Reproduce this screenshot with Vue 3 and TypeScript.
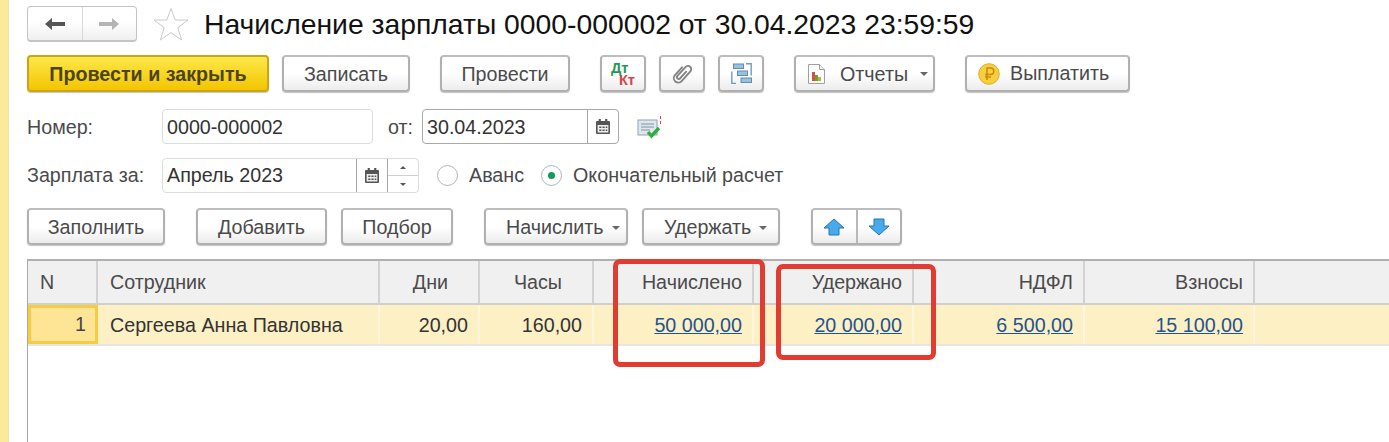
<script setup lang="ts">
interface Column { title: string; value: string; link?: boolean; inset?: boolean; align: 'left' | 'right' }
const columns: Column[] = [
  { title: 'Сотрудник', value: 'Сергеева Анна Павловна', align: 'left' },
  { title: 'Дни', value: '20,00', inset: true, align: 'right' },
  { title: 'Часы', value: '160,00', inset: true, align: 'right' },
  { title: 'Начислено', value: '50 000,00', link: true, align: 'right' },
  { title: 'Удержано', value: '20 000,00', link: true, align: 'right' },
  { title: 'НДФЛ', value: '6 500,00', link: true, align: 'right' },
  { title: 'Взносы', value: '15 100,00', link: true, align: 'right' },
]
</script>

<template>
  <div class="page">
    <aside class="strip"></aside>
    <main class="content">
      <div class="title-row">
        <div class="nav">
          <span class="nav-cell">
            <svg width="22" height="16" viewBox="0 0 22 16"><path d="M1 8 8 2v4h13v4H8v4z" fill="#555"/></svg>
          </span>
          <span class="nav-cell">
            <svg width="22" height="16" viewBox="0 0 22 16"><path d="M21 8 14 2v4H1v4h13v4z" fill="#b5b5b5"/></svg>
          </span>
        </div>
        <svg class="star" width="36" height="34" viewBox="0 0 36 34"><path d="M18 1.5 22.2 13H35L24.800 20.700 28.600 33 18 25.600 7.400 33l3.800-12.300L1 13h12.800z" fill="#fff" stroke="#c9c9c9"/></svg>
        <h1>Начисление зарплаты 0000-000002 от 30.04.2023 23:59:59</h1>
      </div>

      <div class="toolbar tb-1">
        <button class="btn primary w-242">Провести и закрыть</button>
        <button class="btn w-128 ml-13">Записать</button>
        <button class="btn w-130 ml-30">Провести</button>
        <button class="btn w-46 ml-30 dtkt"><span class="dt">Дт</span><span class="kt">Кт</span></button>
        <button class="btn w-46 ml-13 icon-btn">
          <svg width="24" height="24" viewBox="0 0 24 24" fill="none" stroke="#858585" stroke-width="1.900" stroke-linecap="round"><path transform="rotate(42 12 12)" d="M7.500 7v10.500a4.500 4.500 0 0 0 9 0V4.500a3.300 3.300 0 0 0-6.600 0v12a1.800 1.800 0 0 0 3.600 0V7.500"/></svg>
        </button>
        <button class="btn w-46 ml-13 icon-btn">
          <svg width="21" height="21" viewBox="0 0 21 21">
            <path d="M5 20.500H.8V8.500M15 .7h5.200v11.800" fill="none" stroke="#6e9cc0" stroke-width="1.400"/>
            <rect x="2.500" y="1" width="10" height="4.500" fill="#9cc0da" stroke="#5d8db3"/>
            <rect x="6.500" y="8" width="10" height="4.500" fill="#9cc0da" stroke="#5d8db3"/>
            <rect x="10" y="15" width="10.500" height="4.500" fill="#9cc0da" stroke="#5d8db3"/>
          </svg>
        </button>
        <button class="btn w-141 ml-30 report">
          <svg width="17" height="20" viewBox="0 0 17 20"><path d="M.5.5h11l5 5v14H.5z" fill="#fff" stroke="#a0a0a0"/><path d="M11.500.5v5h5" fill="#eee" stroke="#a0a0a0"/><rect x="4" y="8" width="3" height="9" fill="#d9533f"/><rect x="7" y="11" width="3" height="6" fill="#5aa83c"/><rect x="10" y="13" width="3" height="4" fill="#d9a52f"/></svg>
          <span class="report-text">Отчеты</span><i class="caret wide"></i>
        </button>
        <button class="btn w-165 ml-30 pay">
          <svg width="22" height="22" viewBox="0 0 22 22"><circle cx="11" cy="11" r="10.300" fill="#f7cf3d" stroke="#e3ad2a"/><path d="M9 17V5h3.500a3.200 3.200 0 0 1 0 6.500H7M7 14h6" fill="none" stroke="#c98a10" stroke-width="1.500"/></svg>
          <span>Выплатить</span>
        </button>
      </div>

      <div class="form-row fr-1">
        <label class="label">Номер:</label>
        <div class="field w-211"><span class="field-text">0000-000002</span></div>
        <label class="label-inline">от:</label>
        <div class="field w-197 active">
          <span class="field-text">30.04.2023</span>
          <span class="addon">
            <svg width="14" height="15" viewBox="0 0 13 15" preserveAspectRatio="none"><path d="M1 2h11a1 1 0 0 1 1 1v11a1 1 0 0 1-1 1H1a1 1 0 0 1-1-1V3a1 1 0 0 1 1-1z" fill="#555"/><rect x="2.500" y="0" width="2" height="4" fill="#555"/><rect x="8.500" y="0" width="2" height="4" fill="#555"/><rect x="1.500" y="6" width="10" height="7.500" fill="#eee"/><path d="M3 7.500h2v1.500H3zM6 7.500h2v1.500H6zM9 7.500h1.500v1.500H9zM3 10.500h2V12H3zM6 10.500h2V12H6zM9 10.500h1.500V12H9z" fill="#555"/></svg>
          </span>
        </div>
        <svg class="doc-status" width="26" height="24" viewBox="0 0 26 24">
          <rect x="1" y="5" width="19" height="15" fill="#dfe6ec" stroke="#8fa3b3"/>
          <path d="M4 9h13M4 12h13M4 15h9" stroke="#7f95a6" stroke-width="1.200"/>
          <path d="M11 17l3.500 4L22 13" fill="none" stroke="#2fae3f" stroke-width="3.400"/>
          <path d="M23.500 1v3M23.500 6v3" stroke="#d8434b" stroke-width="1"/>
        </svg>
      </div>

      <div class="form-row fr-2">
        <label class="label">Зарплата за:</label>
        <div class="field w-257">
          <span class="field-text">Апрель 2023</span>
          <span class="addon">
            <svg width="14" height="15" viewBox="0 0 13 15" preserveAspectRatio="none"><path d="M1 2h11a1 1 0 0 1 1 1v11a1 1 0 0 1-1 1H1a1 1 0 0 1-1-1V3a1 1 0 0 1 1-1z" fill="#555"/><rect x="2.500" y="0" width="2" height="4" fill="#555"/><rect x="8.500" y="0" width="2" height="4" fill="#555"/><rect x="1.500" y="6" width="10" height="7.500" fill="#eee"/><path d="M3 7.500h2v1.500H3zM6 7.500h2v1.500H6zM9 7.500h1.500v1.500H9zM3 10.500h2V12H3zM6 10.500h2V12H6zM9 10.500h1.500V12H9z" fill="#555"/></svg>
          </span>
          <span class="spin">
            <span class="spin-cell"><i class="tri up"></i></span>
            <span class="spin-cell"><i class="tri down"></i></span>
          </span>
        </div>
        <span class="radio r-first"></span>
        <span class="radio-text">Аванс</span>
        <span class="radio r-second checked"><i></i></span>
        <span class="radio-text">Окончательный расчет</span>
      </div>

      <div class="toolbar tb-2">
        <button class="btn w-138">Заполнить</button>
        <button class="btn w-131 ml-31">Добавить</button>
        <button class="btn w-112 ml-14">Подбор</button>
        <button class="btn w-144 ml-31 with-caret">Начислить<i class="caret"></i></button>
        <button class="btn w-138 ml-14 with-caret">Удержать<i class="caret"></i></button>
        <div class="btn-group ml-31">
          <button class="seg">
            <svg width="22" height="18" viewBox="0 0 22 18"><path d="M11 1 21 10h-5v7H6v-7H1z" fill="#4aa9ea" stroke="#1f78b4"/></svg>
          </button>
          <button class="seg">
            <svg width="22" height="18" viewBox="0 0 22 18"><path d="M11 17 21 8h-5V1H6v7H1z" fill="#4aa9ea" stroke="#1f78b4"/></svg>
          </button>
        </div>
      </div>

      <section class="table">
        <div class="t-row head">
          <div class="cell c-n">N</div>
          <div v-for="c in columns" :key="c.title" class="cell" :class="[c.align, { inset: c.inset }]">{{ c.title }}</div>
          <div class="cell filler"></div>
        </div>
        <div class="t-row body">
          <div class="cell c-sel">1</div>
          <div v-for="c in columns" :key="c.title" class="cell" :class="c.align">
            <a v-if="c.link" href="#" @click.prevent>{{ c.value }}</a>
            <template v-else>{{ c.value }}</template>
          </div>
          <div class="cell filler"></div>
        </div>
        <div class="mark mark-a"></div>
        <div class="mark mark-b"></div>
      </section>
    </main>
  </div>
</template>

<style>
html, body { margin: 0; background: #fff; overflow: hidden; }
</style>

<style scoped>
.page {
  display: flex;
  width: 1389px;
  height: 442px;
  overflow: hidden;
  font-family: "Liberation Sans", Arial, sans-serif;
  font-size: 19.7px;
  color: #4a4a4a;
  background: #fff;
}
.strip { width: 8px; flex: none; background: #fbe99c; border-right: 1px solid #f3e3a8; }
.content { flex: 1; min-width: 0; padding: 6px 0 0 18px; display: flex; flex-direction: column; }

.title-row { display: flex; align-items: center; height: 36px; }
.nav { display: flex; width: 110px; height: 36px; box-sizing: border-box; border: 1px solid #c4c4c4; border-bottom-width: 2px; border-radius: 4px; background: linear-gradient(#fff 45%, #efefef); }
.nav-cell { flex: 1; display: flex; align-items: center; justify-content: center; }
.nav-cell + .nav-cell { border-left: 1px solid #d8d8d8; }
.star { margin-left: 16px; flex: none; }
h1 { margin: 0 0 0 15px; font-size: 28.3px; font-weight: 400; color: #111; white-space: nowrap; }

.toolbar { display: flex; align-items: stretch; }
.tb-1 { margin-top: 13px; height: 37px; }
.tb-2 { margin-top: 15px; height: 37px; }

.btn {
  display: flex; align-items: center; justify-content: center; flex: none;
  box-sizing: border-box; padding: 2px 0 0;
  font: inherit; color: #4a4a4a;
  background: linear-gradient(#fff 50%, #ececec);
  border: 2px solid #b0b0b0;
  border-top-color: #bdbdbd;
  border-radius: 4px;
  box-shadow: 0 1px 1px #c4c4c4;
}
.icon-btn { padding-top: 0; }
.primary { background: linear-gradient(#fde84a, #f3c500); border-color: #c9a618; color: #4d4416; font-weight: 700; }
.w-242 { width: 242px; } .w-128 { width: 128px; } .w-130 { width: 130px; } .w-46 { width: 46px; }
.w-141 { width: 141px; } .w-165 { width: 165px; } .w-138 { width: 138px; } .w-131 { width: 131px; }
.w-112 { width: 112px; } .w-144 { width: 144px; }
.ml-13 { margin-left: 13px; } .ml-14 { margin-left: 14px; } .ml-30 { margin-left: 30px; } .ml-31 { margin-left: 31px; }

.dtkt { flex-direction: column; align-items: flex-start; padding: 0 0 0 9px; font-size: 14.5px; font-weight: 700; line-height: 12px; }
.dt { color: #1f9a55; }
.kt { color: #d8434b; margin-left: 8px; }
.with-caret { justify-content: flex-start; padding-left: 20px; }
.report { justify-content: flex-start; padding: 0 0 0 12px; }
.report-text { margin: 2px 0 0 15px; }
.caret { display: inline-block; margin-left: 8px; border-left: 4px solid transparent; border-right: 4px solid transparent; border-top: 4px solid #666; }
.caret.wide { margin-left: 12px; }
.pay { justify-content: flex-start; padding: 0 0 0 11px; gap: 10px; }

.form-row { display: flex; align-items: center; height: 35px; }
.fr-1 { margin-top: 17px; }
.fr-2 { margin-top: 14px; }
.fr-1 .label, .fr-1 .label-inline { padding-top: 2px; }
.fr-1 .field-text { line-height: 35px; }
.label { width: 135px; flex: none; }
.label-inline { margin-left: 15px; width: 34px; flex: none; }
.field { display: flex; align-items: stretch; height: 35px; box-sizing: border-box; border: 1px solid #dcdcdc; border-radius: 4px; background: #fff; flex: none; }
.field.active { border-color: #a8a8a8; }
.w-211 { width: 211px; } .w-197 { width: 197px; } .w-257 { width: 257px; }
.field-text { flex: 1; line-height: 33px; padding-left: 4px; color: #333; }
.addon { width: 30px; display: flex; align-items: center; justify-content: center; border-left: 1px solid #a8a8a8; flex: none; }
.spin { width: 30px; flex: none; display: flex; flex-direction: column; border-left: 1px solid #a8a8a8; }
.spin-cell { flex: 1; display: flex; align-items: center; justify-content: center; }
.spin-cell + .spin-cell { border-top: 1px solid #d0d0d0; }
.tri { border-left: 3px solid transparent; border-right: 3px solid transparent; }
.tri.up { border-bottom: 3px solid #555; }
.tri.down { border-top: 3px solid #555; }
.doc-status { margin-left: 18px; flex: none; }

.radio { width: 21px; height: 21px; box-sizing: border-box; border: 1px solid #b4b4b4; border-radius: 50%; display: flex; align-items: center; justify-content: center; flex: none; background: #fff; }
.radio i { width: 7px; height: 7px; border-radius: 50%; background: #129a5b; }
.r-first { margin-left: 18px; }
.r-second { margin-left: 17px; }
.radio-text { margin-left: 11px; white-space: nowrap; }

.btn-group { display: flex; width: 91px; box-sizing: border-box; border: 2px solid #b0b0b0; border-top-color: #bdbdbd; border-radius: 4px; box-shadow: 0 1px 1px #c4c4c4; background: linear-gradient(#fff 50%, #ececec); }
.seg { flex: 1; padding: 0; background: none; border: 0; display: flex; align-items: center; justify-content: center; }
.seg + .seg { border-left: 2px solid #b8b8b8; }

.table { position: relative; margin-top: 14px; flex: 1; border-top: 2px solid #b0b0b0; border-left: 1px solid #a8a8a8; }
.t-row { display: grid; grid-template-columns: 70px 282px 100px 114px 160px 160px 171px 170px 1fr; }
.head { height: 44px; background: #f0f0f0; border-bottom: 2px solid #cfcfcf; box-sizing: border-box; }
.body { height: 41px; background: #fdf0c5; border-bottom: 2px solid #e6e6e6; box-sizing: border-box; }
.cell { box-sizing: border-box; padding: 0 10px 0 12px; display: flex; align-items: center; white-space: nowrap; border-right: 2px solid #d2d2d2; }
.cell.inset { padding-right: 30px; }
.body .cell { padding-top: 2px; border-right-color: #fff6dc; color: #333; }
.cell.right { justify-content: flex-end; }
.cell.filler { border-right: 0; }
.body .c-sel { justify-content: flex-end; background: #fde595; border: 3px solid #f6cd40; padding: 0 9px 0 0; color: #444; }
.body a { color: #245391; text-decoration: underline; }
.mark { position: absolute; box-sizing: border-box; border: 5px solid #e03c31; border-radius: 7px; pointer-events: none; }
.mark-a { left: 585px; top: -2px; width: 152px; height: 108px; }
.mark-b { left: 748px; top: 3px; width: 160px; height: 96px; }
</style>
